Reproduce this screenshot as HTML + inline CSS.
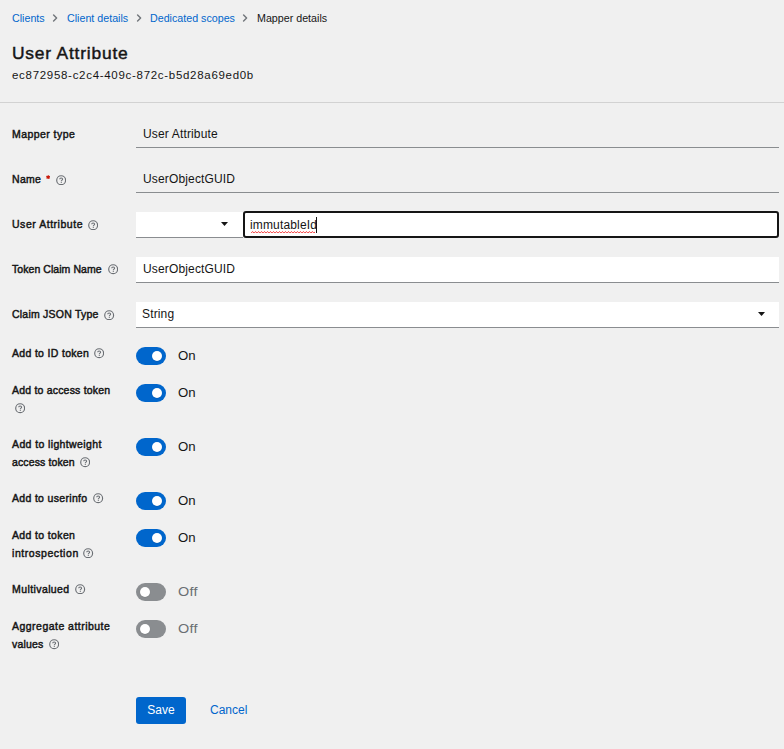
<!DOCTYPE html>
<html><head><meta charset="utf-8">
<style>
*{box-sizing:border-box;margin:0;padding:0}
html,body{width:784px;height:749px;overflow:hidden;background:#f0f0f0;font-family:"Liberation Sans",sans-serif;color:#151515}
.abs{position:absolute;white-space:nowrap}
.bc{top:11px;font-size:10.7px;line-height:14px;color:#06c}
.bc.cur{color:#151515}
.chv,.hp,.crt{position:absolute}
.hp{fill:#6a6e73}
.title{left:12px;top:41.5px;font-size:17.4px;line-height:22px;font-weight:normal;-webkit-text-stroke:0.45px #151515;letter-spacing:0.8px}
.uuid{left:12px;top:68px;font-size:11.5px;line-height:14px;letter-spacing:0.7px}
.sep{position:absolute;left:0;top:102px;width:784px;height:1px;background:#d2d2d2}
.lbl{position:absolute;white-space:nowrap;font-size:10.5px;font-weight:normal;-webkit-text-stroke:0.45px #151515;line-height:18px;left:12px}
.lbl span{display:block}
.ro{position:absolute;left:136px;width:643px;height:27px;border-bottom:1px solid #8a8d90;background:#f0f0f0}
.inp{position:absolute;background:#fff;border-bottom:1px solid #8a8d90}
.txt{position:absolute;font-size:12px;line-height:14px;color:#151515;white-space:nowrap;letter-spacing:0.15px}
.tog{position:absolute;left:136px;width:30px;height:18px;border-radius:9px;background:#06c}
.tog::after{content:"";position:absolute;top:4px;left:16px;width:10px;height:10px;border-radius:50%;background:#fff;box-shadow:0 0.5px 1px rgba(3,3,3,.15)}
.tog.off{background:#8a8d90}
.tog.off::after{left:4px}
.tl{position:absolute;left:178px;font-size:12px;line-height:14px;color:#151515}
.tl.off{color:#6a6e73}
.sx1{display:inline-block;transform-origin:0 0;transform:scaleX(1.1)}
.sx2{display:inline-block;transform-origin:0 0;transform:scaleX(1.2);letter-spacing:0.2px}
</style></head><body>
<div class="abs bc" style="left:12px">Clients</div>
<svg class="chv" style="left:52px;top:14px" width="6" height="8" viewBox="0 0 6 8"><path d="M1.6 0.9 L4.6 4 L1.6 7.1" fill="none" stroke="#72767b" stroke-width="1.4" stroke-linecap="round" stroke-linejoin="round"/></svg>
<div class="abs bc" style="left:67px">Client details</div>
<svg class="chv" style="left:136px;top:14px" width="6" height="8" viewBox="0 0 6 8"><path d="M1.6 0.9 L4.6 4 L1.6 7.1" fill="none" stroke="#72767b" stroke-width="1.4" stroke-linecap="round" stroke-linejoin="round"/></svg>
<div class="abs bc" style="left:150px">Dedicated scopes</div>
<svg class="chv" style="left:242px;top:14px" width="6" height="8" viewBox="0 0 6 8"><path d="M1.6 0.9 L4.6 4 L1.6 7.1" fill="none" stroke="#72767b" stroke-width="1.4" stroke-linecap="round" stroke-linejoin="round"/></svg>
<div class="abs bc cur" style="left:257px">Mapper details</div>
<div class="abs title">User Attribute</div>
<div class="abs uuid">ec872958-c2c4-409c-872c-b5d28a69ed0b</div>
<div class="sep"></div>
<div class="lbl" style="top:125px"><span style="letter-spacing:0.440px">Mapper type</span></div>
<div class="ro" style="top:121px"></div>
<div class="txt" style="left:143px;top:127px">User Attribute</div>
<div class="lbl" style="top:170px"><span style="letter-spacing:0.300px">Name</span></div>
<svg style="position:absolute;left:46px;top:174.8px" width="4.4" height="4.4" viewBox="0 0 6 6"><g stroke="#c9190b" stroke-width="1.6" stroke-linecap="round"><path d="M3 0.8V5.2M1.1 1.9L4.9 4.1M1.1 4.1L4.9 1.9"/></g></svg>
<svg class="hp" style="left:55.95px;top:174.55px" width="10.5" height="10.5" viewBox="0 0 21 21"><circle cx="10.3" cy="10.4" r="8.9" fill="none" stroke="#6a6e73" stroke-width="2.3"/><path d="M7.4 8.6C7.4 6.9 8.7 5.9 10.3 5.9C12 5.9 13.2 6.9 13.2 8.4C13.2 10.2 10.6 10.4 10.6 12.1V12.5" fill="none" stroke="#6a6e73" stroke-width="2.1"/><circle cx="10.6" cy="14.6" r="1.25" fill="#6a6e73"/></svg>
<div class="ro" style="top:166px"></div>
<div class="txt" style="left:143px;top:172px">UserObjectGUID</div>
<div class="lbl" style="top:215px"><span style="letter-spacing:0.531px">User Attribute</span></div>
<svg class="hp" style="left:87.95px;top:219.55px" width="10.5" height="10.5" viewBox="0 0 21 21"><circle cx="10.3" cy="10.4" r="8.9" fill="none" stroke="#6a6e73" stroke-width="2.3"/><path d="M7.4 8.6C7.4 6.9 8.7 5.9 10.3 5.9C12 5.9 13.2 6.9 13.2 8.4C13.2 10.2 10.6 10.4 10.6 12.1V12.5" fill="none" stroke="#6a6e73" stroke-width="2.1"/><circle cx="10.6" cy="14.6" r="1.25" fill="#6a6e73"/></svg>
<div class="inp" style="left:136px;top:212px;width:107px;height:26px"></div>
<svg class="crt" style="left:221.4px;top:222.3px" width="7" height="4" viewBox="0 0 7 4"><path d="M0 0H7L3.5 4Z" fill="#151515"/></svg>
<div class="inp" style="left:243px;top:211px;width:536px;height:27px;border:2px solid #151515;border-radius:3px"></div>
<div class="txt" style="left:250px;top:218px">immutableId</div>
<svg style="position:absolute;left:251px;top:230.8px" width="64" height="2.6" viewBox="0 0 64 2.6"><path d="M0 2.2 L1.5 0.5 L3 2.2 L4.5 0.5 L6 2.2 L7.5 0.5 L9 2.2 L10.5 0.5 L12 2.2 L13.5 0.5 L15 2.2 L16.5 0.5 L18 2.2 L19.5 0.5 L21 2.2 L22.5 0.5 L24 2.2 L25.5 0.5 L27 2.2 L28.5 0.5 L30 2.2 L31.5 0.5 L33 2.2 L34.5 0.5 L36 2.2 L37.5 0.5 L39 2.2 L40.5 0.5 L42 2.2 L43.5 0.5 L45 2.2 L46.5 0.5 L48 2.2 L49.5 0.5 L51 2.2 L52.5 0.5 L54 2.2 L55.5 0.5 L57 2.2 L58.5 0.5 L60 2.2 L61.5 0.5 L63 2.2 L64.5 0.5 L66 2.2" fill="none" stroke="#f43a3a" stroke-width="0.95"/></svg>
<div style="position:absolute;left:316px;top:217px;width:1px;height:16px;background:#151515"></div>
<div class="lbl" style="top:260px"><span style="letter-spacing:0.060px">Token Claim Name</span></div>
<svg class="hp" style="left:107.95px;top:264.35px" width="10.5" height="10.5" viewBox="0 0 21 21"><circle cx="10.3" cy="10.4" r="8.9" fill="none" stroke="#6a6e73" stroke-width="2.3"/><path d="M7.4 8.6C7.4 6.9 8.7 5.9 10.3 5.9C12 5.9 13.2 6.9 13.2 8.4C13.2 10.2 10.6 10.4 10.6 12.1V12.5" fill="none" stroke="#6a6e73" stroke-width="2.1"/><circle cx="10.6" cy="14.6" r="1.25" fill="#6a6e73"/></svg>
<div class="inp" style="left:136px;top:257px;width:643px;height:26px"></div>
<div class="txt" style="left:143px;top:262px">UserObjectGUID</div>
<div class="lbl" style="top:305px"><span style="letter-spacing:0.221px">Claim JSON Type</span></div>
<svg class="hp" style="left:104.15px;top:309.75px" width="10.5" height="10.5" viewBox="0 0 21 21"><circle cx="10.3" cy="10.4" r="8.9" fill="none" stroke="#6a6e73" stroke-width="2.3"/><path d="M7.4 8.6C7.4 6.9 8.7 5.9 10.3 5.9C12 5.9 13.2 6.9 13.2 8.4C13.2 10.2 10.6 10.4 10.6 12.1V12.5" fill="none" stroke="#6a6e73" stroke-width="2.1"/><circle cx="10.6" cy="14.6" r="1.25" fill="#6a6e73"/></svg>
<div class="inp" style="left:136px;top:302px;width:643px;height:26px"></div>
<svg class="crt" style="left:758.4px;top:312.2px" width="7" height="4" viewBox="0 0 7 4"><path d="M0 0H7L3.5 4Z" fill="#151515"/></svg>
<div class="txt" style="left:142px;top:307px">String</div>
<div class="lbl" style="top:344px"><span style="letter-spacing:0.321px">Add to ID token</span></div>
<svg class="hp" style="left:93.95px;top:348.05px" width="10.5" height="10.5" viewBox="0 0 21 21"><circle cx="10.3" cy="10.4" r="8.9" fill="none" stroke="#6a6e73" stroke-width="2.3"/><path d="M7.4 8.6C7.4 6.9 8.7 5.9 10.3 5.9C12 5.9 13.2 6.9 13.2 8.4C13.2 10.2 10.6 10.4 10.6 12.1V12.5" fill="none" stroke="#6a6e73" stroke-width="2.1"/><circle cx="10.6" cy="14.6" r="1.25" fill="#6a6e73"/></svg>
<div class="tog" style="top:347px"></div><div class="tl" style="top:349px"><span class=sx1>On</span></div>
<div class="lbl" style="top:381px"><span style="letter-spacing:0.200px">Add to access token</span></div>
<svg class="hp" style="left:14.85px;top:403.05px" width="10.5" height="10.5" viewBox="0 0 21 21"><circle cx="10.3" cy="10.4" r="8.9" fill="none" stroke="#6a6e73" stroke-width="2.3"/><path d="M7.4 8.6C7.4 6.9 8.7 5.9 10.3 5.9C12 5.9 13.2 6.9 13.2 8.4C13.2 10.2 10.6 10.4 10.6 12.1V12.5" fill="none" stroke="#6a6e73" stroke-width="2.1"/><circle cx="10.6" cy="14.6" r="1.25" fill="#6a6e73"/></svg>
<div class="tog" style="top:384px"></div><div class="tl" style="top:386px"><span class=sx1>On</span></div>
<div class="lbl" style="top:435px"><span style="letter-spacing:0.382px">Add to lightweight</span><span style="letter-spacing:0.127px">access token</span></div>
<svg class="hp" style="left:79.95px;top:457.05px" width="10.5" height="10.5" viewBox="0 0 21 21"><circle cx="10.3" cy="10.4" r="8.9" fill="none" stroke="#6a6e73" stroke-width="2.3"/><path d="M7.4 8.6C7.4 6.9 8.7 5.9 10.3 5.9C12 5.9 13.2 6.9 13.2 8.4C13.2 10.2 10.6 10.4 10.6 12.1V12.5" fill="none" stroke="#6a6e73" stroke-width="2.1"/><circle cx="10.6" cy="14.6" r="1.25" fill="#6a6e73"/></svg>
<div class="tog" style="top:438px"></div><div class="tl" style="top:440px"><span class=sx1>On</span></div>
<div class="lbl" style="top:489px"><span style="letter-spacing:0.321px">Add to userinfo</span></div>
<svg class="hp" style="left:93.05px;top:493.05px" width="10.5" height="10.5" viewBox="0 0 21 21"><circle cx="10.3" cy="10.4" r="8.9" fill="none" stroke="#6a6e73" stroke-width="2.3"/><path d="M7.4 8.6C7.4 6.9 8.7 5.9 10.3 5.9C12 5.9 13.2 6.9 13.2 8.4C13.2 10.2 10.6 10.4 10.6 12.1V12.5" fill="none" stroke="#6a6e73" stroke-width="2.1"/><circle cx="10.6" cy="14.6" r="1.25" fill="#6a6e73"/></svg>
<div class="tog" style="top:492px"></div><div class="tl" style="top:494px"><span class=sx1>On</span></div>
<div class="lbl" style="top:526px"><span style="letter-spacing:0.364px">Add to token</span><span style="letter-spacing:0.558px">introspection</span></div>
<svg class="hp" style="left:83.05px;top:547.85px" width="10.5" height="10.5" viewBox="0 0 21 21"><circle cx="10.3" cy="10.4" r="8.9" fill="none" stroke="#6a6e73" stroke-width="2.3"/><path d="M7.4 8.6C7.4 6.9 8.7 5.9 10.3 5.9C12 5.9 13.2 6.9 13.2 8.4C13.2 10.2 10.6 10.4 10.6 12.1V12.5" fill="none" stroke="#6a6e73" stroke-width="2.1"/><circle cx="10.6" cy="14.6" r="1.25" fill="#6a6e73"/></svg>
<div class="tog" style="top:529px"></div><div class="tl" style="top:531px"><span class=sx1>On</span></div>
<div class="lbl" style="top:580px"><span style="letter-spacing:0.410px">Multivalued</span></div>
<svg class="hp" style="left:75.05px;top:583.95px" width="10.5" height="10.5" viewBox="0 0 21 21"><circle cx="10.3" cy="10.4" r="8.9" fill="none" stroke="#6a6e73" stroke-width="2.3"/><path d="M7.4 8.6C7.4 6.9 8.7 5.9 10.3 5.9C12 5.9 13.2 6.9 13.2 8.4C13.2 10.2 10.6 10.4 10.6 12.1V12.5" fill="none" stroke="#6a6e73" stroke-width="2.1"/><circle cx="10.6" cy="14.6" r="1.25" fill="#6a6e73"/></svg>
<div class="tog off" style="top:583px"></div><div class="tl off" style="top:585px"><span class=sx2>Off</span></div>
<div class="lbl" style="top:617px"><span style="letter-spacing:0.472px">Aggregate attribute</span><span style="letter-spacing:0.180px">values</span></div>
<svg class="hp" style="left:48.75px;top:639.25px" width="10.5" height="10.5" viewBox="0 0 21 21"><circle cx="10.3" cy="10.4" r="8.9" fill="none" stroke="#6a6e73" stroke-width="2.3"/><path d="M7.4 8.6C7.4 6.9 8.7 5.9 10.3 5.9C12 5.9 13.2 6.9 13.2 8.4C13.2 10.2 10.6 10.4 10.6 12.1V12.5" fill="none" stroke="#6a6e73" stroke-width="2.1"/><circle cx="10.6" cy="14.6" r="1.25" fill="#6a6e73"/></svg>
<div class="tog off" style="top:620px"></div><div class="tl off" style="top:622px"><span class=sx2>Off</span></div>
<div style="position:absolute;left:136px;top:697px;width:50px;height:27px;background:#06c;border-radius:3px;color:#fff;font-size:12px;line-height:27px;text-align:center">Save</div>
<div class="abs" style="left:210px;top:703px;font-size:12px;line-height:14px;color:#06c">Cancel</div>
</body></html>
